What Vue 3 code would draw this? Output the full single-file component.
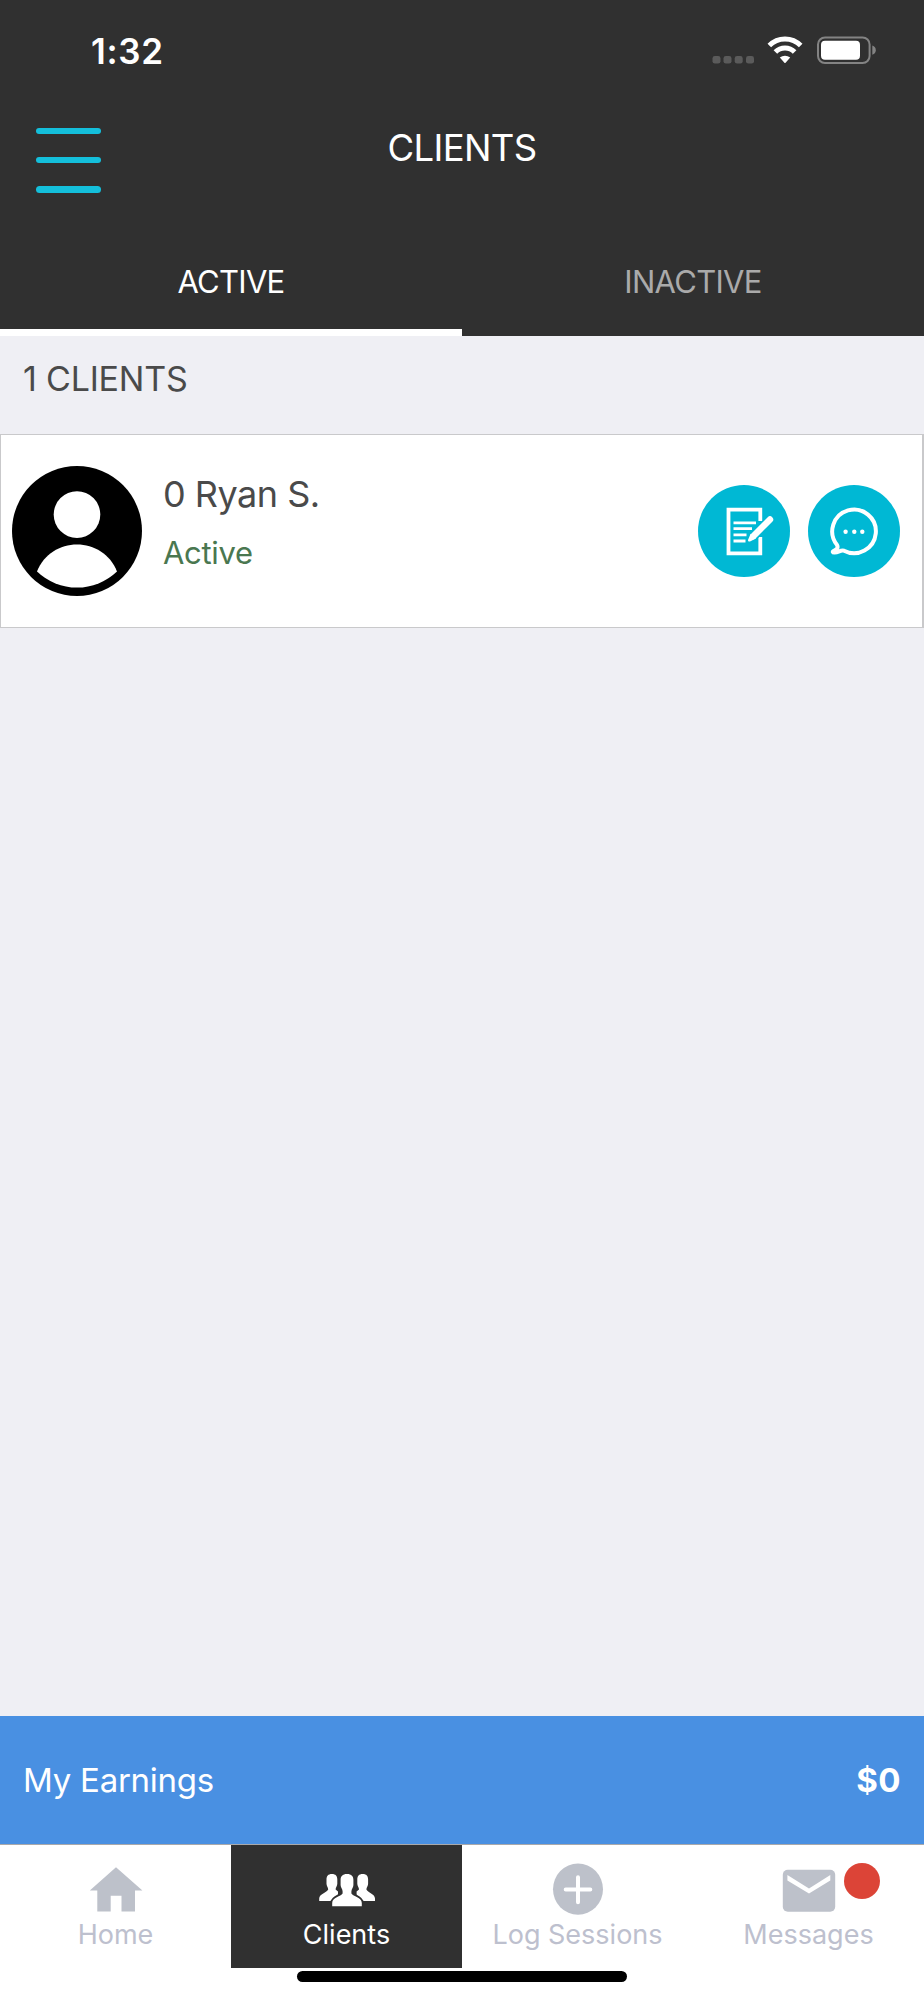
<script setup>
import { ref } from "vue";

let activeTab = ref("active");
let activeNav = ref("clients");

const tabs = [
  { id: "active", label: "ACTIVE" },
  { id: "inactive", label: "INACTIVE" }
];

const clients = ref([{ id: 1, name: "0 Ryan S.", status: "Active" }]);

const navItems = [
  { id: "home", label: "Home" },
  { id: "clients", label: "Clients" },
  { id: "log", label: "Log Sessions" },
  { id: "messages", label: "Messages", unread: true }
];
</script>

<template>
  <div class="screen">

    <header class="header">
      <div class="status-bar">
        <span class="time">1:32</span>
        <svg class="status-icons" width="164" height="28" viewBox="0 0 164 28">
          <g fill="#5b5b5b">
            <rect x="0.5" y="20" width="8" height="7.6" rx="2.4" />
            <rect x="11.5" y="20" width="8" height="7.6" rx="2.4" />
            <rect x="22.7" y="20" width="8" height="7.6" rx="2.4" />
            <rect x="34" y="20" width="8" height="7.6" rx="2.4" />
          </g>
          <g fill="none" stroke="#fff" stroke-width="5">
            <path d="M57.3 9.6A22 22 0 0 1 88.7 9.6" />
            <path d="M63.4 16.1A13.4 13.4 0 0 1 82.6 16.1" />
          </g>
          <path fill="#fff" d="M67.8 21.6A8 8 0 0 1 78.2 21.6L73.6 26.8Q73 27.4 72.4 26.8Z" />
          <rect x="106" y="1.4" width="51.6" height="25.6" rx="7" fill="none" stroke="#838383" stroke-width="2" />
          <rect x="109" y="4.8" width="39" height="19" rx="4" fill="#fff" />
          <path fill="#838383" d="M160.3 9.6Q163.8 10.8 163.8 14.2T160.3 18.8Z" />
        </svg>
      </div>

      <div class="title-bar">
        <button class="menu" aria-label="Menu">
          <span></span>
          <span></span>
          <span></span>
        </button>
        <h1 class="title">CLIENTS</h1>
      </div>

      <div class="tabs">
        <button
          v-for="tab in tabs"
          :key="tab.id"
          class="tab"
          :class="[tab.id, { selected: activeTab === tab.id }]"
          @click="activeTab = tab.id"
        >
          {{ tab.label }}
        </button>
      </div>
    </header>

    <main class="content">
      <h2 class="count">{{ clients.length }} CLIENTS</h2>

      <div v-for="client in clients" :key="client.id" class="client">
        <svg class="avatar" width="130" height="130" viewBox="0 0 130 130">
          <circle cx="65" cy="65" r="65" />
          <circle cx="65" cy="48.6" r="23.3" fill="#fff" />
          <path fill="#fff" d="M25 105.6C32 88 48 78.6 65 78.6S98 88 105 105.6A58 58 0 0 1 25 105.6Z" />
        </svg>

        <div class="client-info">
          <span class="name">{{ client.name }}</span>
          <span class="state">{{ client.status }}</span>
        </div>

        <div class="actions">
          <!-- NOTES -->
          <button class="action" aria-label="Notes">
            <svg width="92" height="92" viewBox="0 0 92 92" fill="none" stroke="#fff">
              <path d="M62.3 36V24.7H30.5V68.3H62.3V52" stroke-width="3.8" />
              <path d="M35.5 37.8H58M35.5 43.7H54M35.5 49.8H48.5M35.5 56H47.5" stroke-width="2.8" />
              <path d="M73 34L57 49.5" stroke="#00b8d4" stroke-width="9.5" />
              <path d="M72 34.4L55.5 51" stroke-width="6.4" stroke-linecap="round" />
              <path d="M52.6 48.8L50 55Q49.8 57 52 56.4L58 53.5Z" fill="#fff" stroke="none" />
            </svg>
          </button>

          <!-- CHAT -->
          <button class="action" aria-label="Chat">
            <svg width="92" height="92" viewBox="0 0 92 92" fill="none" stroke="#fff">
              <path
                d="M36 65.7A21.8 21.8 0 1 0 28.9 59.8C30.4 62.4 29.4 64.4 25.8 65.8C24.2 66.6 24.6 67.7 26.5 67.6C31 67.4 32.6 64.6 36 65.7Z"
                stroke-width="4"
                stroke-linejoin="round"
              />
              <g fill="#fff" stroke="none">
                <circle cx="37.6" cy="46.7" r="2.2" />
                <circle cx="46.3" cy="46.7" r="2.2" />
                <circle cx="54.3" cy="46.7" r="2.2" />
              </g>
            </svg>
          </button>
        </div>
      </div>
    </main>

    <section class="earnings">
      <span class="earnings-label">My Earnings</span>
      <strong class="earnings-total">$0</strong>
    </section>

    <nav class="nav">
      <button
        v-for="item in navItems"
        :key="item.id"
        class="nav-item"
        :class="[item.id, { current: activeNav === item.id }]"
        @click="activeNav = item.id"
      >
        <span class="nav-icon">
          <svg v-if="item.id === 'home'" width="54" height="52" viewBox="0 0 54 52">
            <path d="M27 4.2L53.4 27.6H46V48.6H32.5V32.7H21.7V48.6H8.3V27.6H0.8Z" />
          </svg>

          <svg v-else-if="item.id === 'clients'" width="58" height="52" viewBox="0 0 58 52">
            <path
              d="M13.9 11C10 11 8.5 13.2 8.5 16.4V20.8C8.5 23 10.2 24.6 10.2 26.4C9 29.4 1.2 30.8 1.2 35.4V38H20V28.6L17.6 26.4C17.6 24.6 19.3 23 19.3 20.8V16.4C19.3 13.2 17.8 11 13.9 11Z"
            />
            <path
              d="M44.7 11C48.6 11 50.1 13.2 50.1 16.4V20.8C50.1 23 48.4 24.6 48.4 26.4C49.6 29.4 57 30.8 57 35.4V38H38.6V28.6L41 26.4C41 24.6 39.3 23 39.3 20.8V16.4C39.3 13.2 40.8 11 44.7 11Z"
            />
            <path
              class="front"
              d="M29 11C24.4 11 22.6 13.4 22.6 17V22C22.6 24.6 24.6 26 24.6 28.4V30.6C23 33.4 14.2 34.6 14.2 40V43.2H43.8V40C43.8 34.6 35 33.4 33.4 30.6V28.4C33.4 26 35.4 24.6 35.4 22V17C35.4 13.4 33.6 11 29 11Z"
            />
          </svg>

          <svg v-else-if="item.id === 'log'" width="52" height="52" viewBox="0 0 52 52">
            <ellipse cx="26" cy="26.2" rx="25" ry="25.6" />
            <path d="M26 14.2V39.2M13.7 26.5H38.3" fill="none" stroke="#fff" stroke-width="4" stroke-linecap="round" />
          </svg>

          <svg v-else width="54" height="52" viewBox="0 0 54 52">
            <rect x="0.8" y="6.8" width="52.4" height="42" rx="5" />
            <path d="M5.4 12L27 25.4L48.3 12V17.4L27 30.4L5.4 17.4Z" fill="#fff" />
          </svg>

          <i v-if="item.unread" class="badge"></i>
        </span>
        <span class="nav-label">{{ item.label }}</span>
      </button>
    </nav>

    <div class="home-area">
      <div class="home-indicator"></div>
    </div>

  </div>
</template>

<style>
body {
  margin: 0;
}
</style>

<style scoped>
.screen {
  display: flex;
  flex-direction: column;
  width: 924px;
  height: 2000px;
  background: #efeff4;
  font-family: Inter, "Liberation Sans", sans-serif;
  color: #4a4a4a;
}

button {
  padding: 0;
  border: none;
  background: none;
  font-family: inherit;
}

svg {
  display: block;
}

/* HEADER */
.header {
  height: 336px;
  background: #303030;
  color: #fff;
}

.status-bar {
  display: flex;
  justify-content: space-between;
  box-sizing: border-box;
  height: 101px;
  padding: 36px 48px 0 91px;
}

.time {
  height: 30px;
  line-height: 30px;
  font-size: 35px;
  font-weight: 600;
  letter-spacing: 0.7px;
}

.title-bar {
  display: grid;
  grid-template-columns: 102px 1fr 102px;
  height: 134px;
}

.menu {
  display: flex;
  flex-direction: column;
  justify-content: space-between;
  align-self: start;
  width: 65px;
  height: 65px;
  margin: 26.5px 0 0 36px;
}

.menu span {
  height: 6.6px;
  border-radius: 4px;
  background: #14bfdb;
}

.title {
  margin: 0;
  text-align: center;
  font-size: 36.5px;
  font-weight: 400;
  line-height: 94px;
  letter-spacing: -0.65px;
}

.tabs {
  display: flex;
  height: 101px;
}

.tab {
  box-sizing: border-box;
  width: 462px;
  padding-bottom: 1px;
  border-bottom: 7px solid transparent;
  color: #aaa;
  font-size: 31px;
  line-height: 93px;
  letter-spacing: -0.7px;
}

.tab.selected {
  border-bottom-color: #fff;
  color: #fff;
}

/* CLIENT LIST */
.content {
  flex: 1;
}

.count {
  height: 98px;
  margin: 0;
  padding-left: 23px;
  font-size: 34px;
  font-weight: 400;
  line-height: 86px;
  letter-spacing: -0.2px;
}

.client {
  display: flex;
  align-items: center;
  box-sizing: border-box;
  height: 194px;
  padding: 0 22px 1px 11px;
  border: 1px solid #c9c9cb;
  border-right-width: 2px;
  background: #fff;
}

.client-info {
  display: flex;
  flex: 1;
  flex-direction: column;
  align-self: flex-start;
  margin: 29px 0 0 21px;
}

.name {
  font-size: 36px;
  line-height: 60px;
  letter-spacing: -0.5px;
}

.state {
  color: #4a7750;
  font-size: 31px;
  line-height: 58px;
  letter-spacing: -0.3px;
}

.actions {
  display: flex;
  gap: 18px;
}

.action {
  width: 92px;
  height: 92px;
  border-radius: 50%;
  background: #00b8d4;
}

/* EARNINGS */
.earnings {
  display: flex;
  align-items: center;
  justify-content: space-between;
  box-sizing: border-box;
  height: 129px;
  padding: 0 23px;
  border-bottom: 1px solid #a9a9ab;
  background: #4990e2;
  color: #fff;
  font-size: 33px;
}

.earnings-label {
  letter-spacing: -0.25px;
}

.earnings-total {
  font-weight: 700;
  letter-spacing: 0.5px;
}

/* BOTTOM NAV */
.nav {
  display: flex;
  height: 123px;
  background: #fff;
}

.nav-item {
  display: flex;
  flex: 1;
  flex-direction: column;
  align-items: center;
  padding-top: 18px;
  color: #bdc0ce;
}

.nav-item.current {
  background: #303030;
  color: #fff;
}

.nav-icon {
  position: relative;
  fill: #bdc1ca;
}

.current .nav-icon {
  fill: #fff;
}

/* outline that keeps the middle person clear of the two behind */
.front {
  stroke: #fff;
  stroke-width: 4px;
  paint-order: stroke;
}

.current .front {
  stroke: #303030;
}

.nav-label {
  font-size: 27px;
  line-height: 39px;
}

.badge {
  position: absolute;
  top: 0;
  left: 62px;
  width: 36px;
  height: 36px;
  border-radius: 50%;
  background: #dc4437;
}

.home-area {
  display: flex;
  justify-content: center;
  height: 32px;
  background: #fff;
}

.home-indicator {
  width: 330px;
  height: 11px;
  margin-top: 3px;
  border-radius: 6px;
  background: #000;
}
</style>
